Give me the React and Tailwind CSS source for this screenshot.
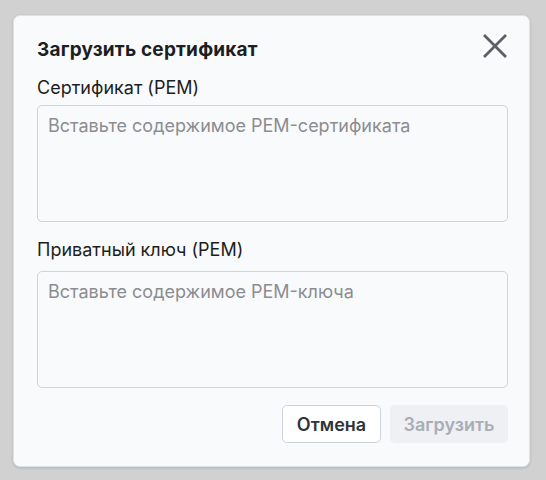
export default function App() {
  return (
    <div className="h-[480px] w-[546px] bg-[#d1d1d1] pt-[15px] pl-[13px] font-['Inter','Liberation_Sans',sans-serif]">
      <div className="relative flex h-[452px] w-[517px] flex-col rounded-[7px] border border-[#dde2ea] bg-[#f9fafc] pt-[22px] pl-[23px] pr-[21px] shadow-[0_1px_3px_rgba(0,0,0,0.15)]">
        {/* Close */}
        <button className="absolute right-[22px] top-[18px] h-6 w-6 text-[#5b6068]">
          <svg viewBox="0 0 24 24" width="24" height="24" fill="none" stroke="currentColor" strokeWidth="2.8" strokeLinecap="square">
            <line x1="2" y1="2" x2="22" y2="22" />
            <line x1="22" y1="2" x2="2" y2="22" />
          </svg>
        </button>

        <h2 className="text-[19px] font-bold leading-6 tracking-[0.2px] text-[#1c1e21]">Загрузить сертификат</h2>

        <label className="mt-[14px] text-[18px] leading-6 text-[#1c1e21]">Сертификат (PEM)</label>
        <textarea
          className="mt-[5px] h-[117px] w-full resize-none rounded-[5px] border border-[#ccd3dd] bg-[#f9fafc] px-[10px] py-2 text-[18px] leading-6 placeholder:text-[#8b8d90] outline-none"
          placeholder="Вставьте содержимое PEM-сертификата"
        />

        <label className="mt-[16px] text-[18px] leading-6 text-[#1c1e21]">Приватный ключ (PEM)</label>
        <textarea
          className="mt-[9px] h-[117px] w-full resize-none rounded-[5px] border border-[#ccd3dd] bg-[#f9fafc] px-[10px] py-2 text-[18px] leading-6 placeholder:text-[#8b8d90] outline-none"
          placeholder="Вставьте содержимое PEM-ключа"
        />

        <div className="mt-[17px] flex justify-end gap-[9px]">
          <button className="h-[38px] w-[99px] rounded-[5px] border border-[#ccd3dd] bg-white text-[18px] font-semibold text-[#303338]">
            Отмена
          </button>
          <button className="h-[38px] w-[118px] rounded-[5px] bg-[#eef0f4] text-[18px] font-semibold text-[#a9adb4]">
            Загрузить
          </button>
        </div>
      </div>
    </div>
  );
}
